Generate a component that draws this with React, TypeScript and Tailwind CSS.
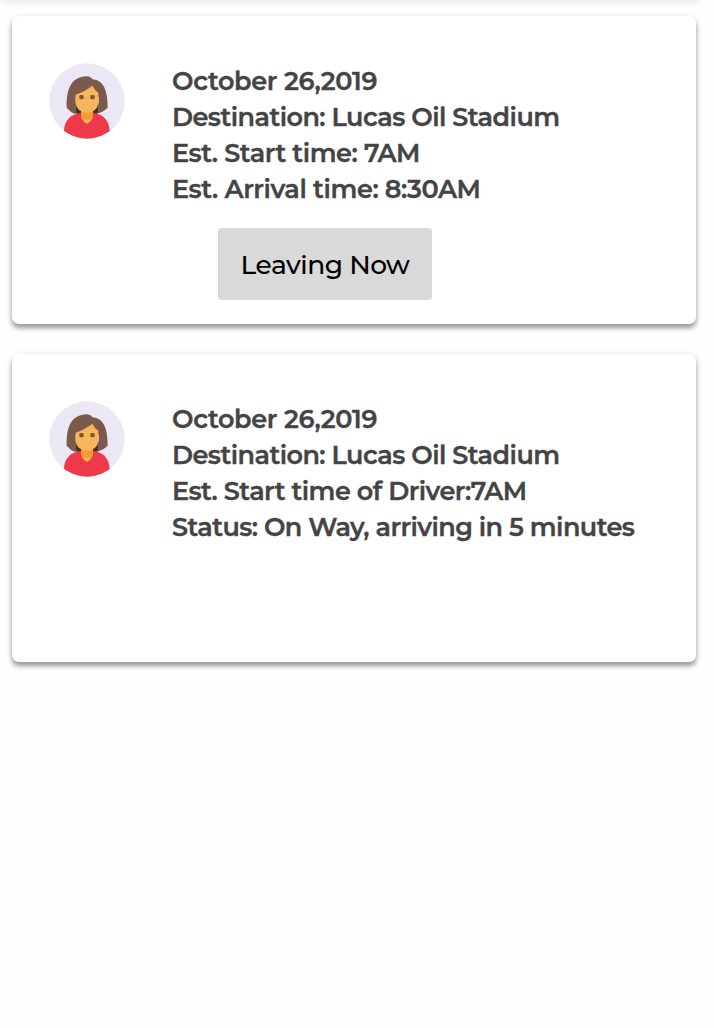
type Line = { text: string; tracking: string };

type Trip = { id: string; lines: Line[]; action?: string };

const trips: Trip[] = [
  {
    id: "scheduled",
    lines: [
      { text: "October 26,2019", tracking: "tracking-[-0.3px]" },
      { text: "Destination: Lucas Oil Stadium", tracking: "tracking-[-0.54px]" },
      { text: "Est. Start time: 7AM", tracking: "tracking-[-0.44px]" },
      { text: "Est. Arrival time: 8:30AM", tracking: "tracking-[-0.39px]" },
    ],
    action: "Leaving Now",
  },
  {
    id: "on-way",
    lines: [
      { text: "October 26,2019", tracking: "tracking-[-0.3px]" },
      { text: "Destination: Lucas Oil Stadium", tracking: "tracking-[-0.54px]" },
      { text: "Est. Start time of Driver:7AM", tracking: "tracking-[-0.52px]" },
      { text: "Status: On Way, arriving in 5 minutes", tracking: "tracking-[-0.56px]" },
    ],
  },
];

function Avatar({ id }: { id: string }) {
  const clip = `avatar-${id}`;
  return (
    <svg className="size-[76px] shrink-0" viewBox="27 24 228 228" aria-hidden="true">
      <defs>
        <clipPath id={clip}>
          <circle cx="141" cy="138" r="113" />
        </clipPath>
      </defs>
      <circle cx="141" cy="138" r="113" fill="#ebe7f4" />
      <g clipPath={`url(#${clip})`}>
        <path d="M106 145H176V172Q172 178 164 180H118Q110 178 106 172Z" fill="#42312e" />
        <path d="M72 226C74 194 94 177 122 174H160C188 177 206 194 209 226L200 256H82Z" fill="#ee394b" />
        <path d="M123 160H159V186Q155 200 141 206Q127 200 123 186Z" fill="#f49c32" />
        <path d="M128 194H154Q150 202 141 206Q132 202 128 194Z" fill="#f5b65d" />
        <path d="M80 158C79 100 94 66 140 64Q150 63 158 73C190 76 203 104 203 158Q192 170 176 175V125H107V178Q90 171 80 158Z" fill="#7b5a4b" />
        <path d="M107 119Q137 108 157 92Q163 105 175 113V142C175 162 158 173 141 173S107 162 107 142Z" fill="#f5b65d" />
        <rect x="118" y="120" width="13" height="13" rx="4" fill="#85552b" />
        <rect x="151" y="120" width="13" height="13" rx="4" fill="#85552b" />
      </g>
    </svg>
  );
}

function TripCard({ trip }: { trip: Trip }) {
  return (
    <article className="flex h-[308px] items-start rounded-[7px] bg-white pt-[47px] pl-[37px] shadow-[0_4px_5px_0_rgba(0,0,0,0.38),0_1px_8px_0_rgba(0,0,0,0.08)]">
      <Avatar id={trip.id} />
      <div className="ml-[47px] flex flex-col items-start">
        {trip.lines.map((line) => (
          <p
            key={line.text}
            className={`h-9 text-[25.5px] leading-9 font-semibold whitespace-nowrap text-[#444444] [-webkit-text-stroke:0.35px_#444444] ${line.tracking}`}
          >
            {line.text}
          </p>
        ))}
        {trip.action && (
          <button
            type="button"
            className="mt-[21px] ml-[46px] h-[72px] w-[214px] rounded-[4px] bg-[#d9d9d9] pt-0.5 text-[26.5px] font-medium tracking-[-0.5px] whitespace-nowrap text-black"
          >
            {trip.action}
          </button>
        )}
      </div>
    </article>
  );
}

export default function App() {
  return (
    <div className="min-h-screen overflow-hidden bg-[#fefefe] font-['Montserrat','Inter',sans-serif]">
      <div className="mr-[14px] h-0 shadow-[0_0_6px_1px_rgba(0,0,0,0.22)]" />
      <main className="flex flex-col gap-[30px] pt-4 pr-[18px] pl-3">
        {trips.map((trip) => (
          <TripCard key={trip.id} trip={trip} />
        ))}
      </main>
    </div>
  );
}
